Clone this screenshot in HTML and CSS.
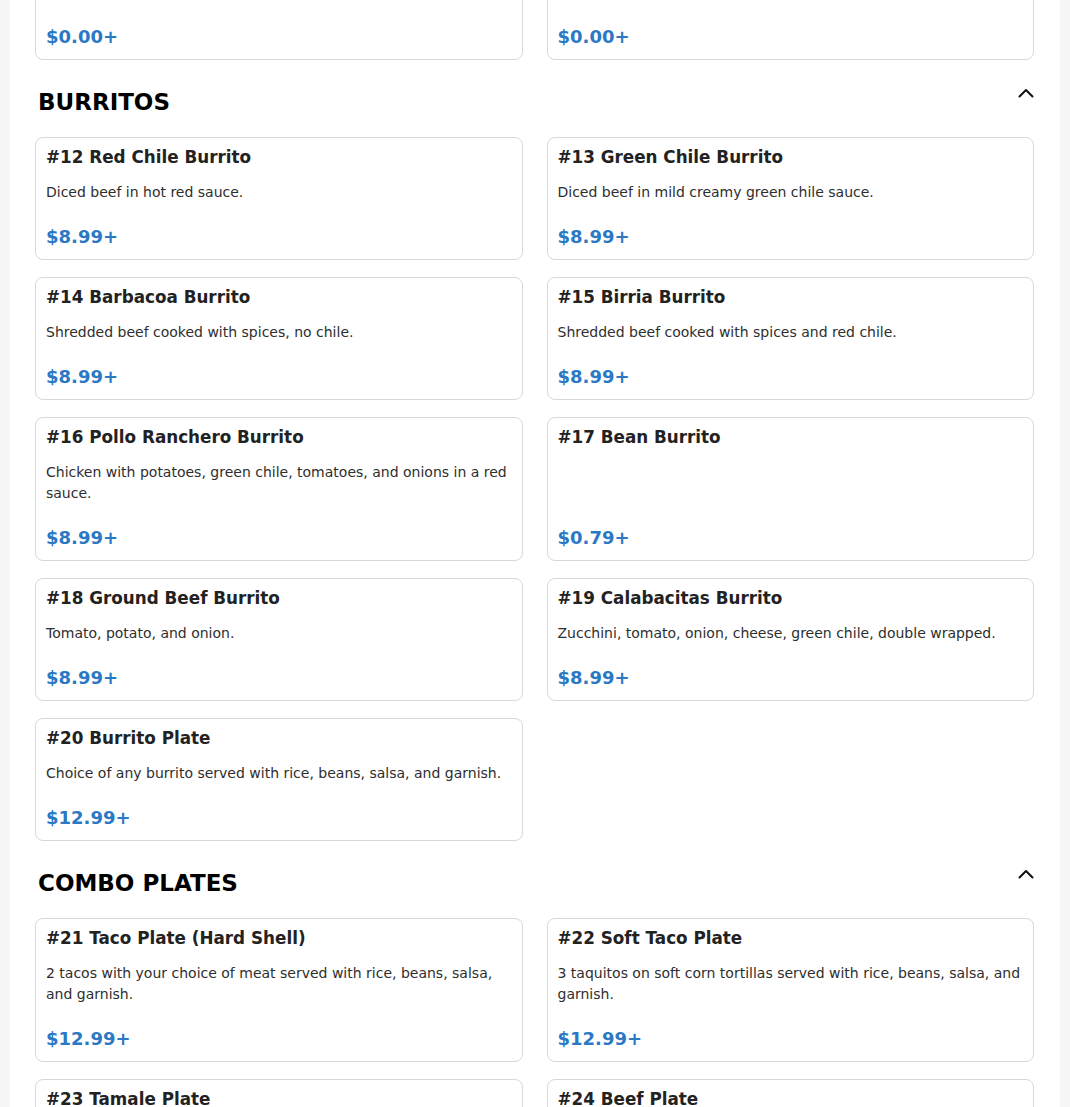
FILE: index.html
```html
<!DOCTYPE html>
<html lang="en">
<head>
<meta charset="utf-8">
<title>Menu</title>
<link rel="stylesheet" href="styles.css">
</head>
<body>
<main class="page">
  <section class="section section--cut">
    <div class="grid grid--cut">
      <article class="card card--cut"><div class="price">$0.00+</div></article>
      <article class="card card--cut"><div class="price">$0.00+</div></article>
    </div>
  </section>

  <section class="section">
    <header class="section-head">
      <h2 class="section-title">BURRITOS</h2>
      <button class="toggle" aria-label="Collapse"><svg width="16" height="16" viewBox="0 0 16 16"><polyline points="1.5,11.5 8,5 14.5,11.5" fill="none" stroke="#111" stroke-width="2" stroke-linecap="round" stroke-linejoin="round"/></svg></button>
    </header>
    <div class="grid">
      <article class="card"><h3 class="item-name">#12 Red Chile Burrito</h3><p class="item-desc">Diced beef in hot red sauce.</p><div class="price">$8.99+</div></article>
      <article class="card"><h3 class="item-name">#13 Green Chile Burrito</h3><p class="item-desc">Diced beef in mild creamy green chile sauce.</p><div class="price">$8.99+</div></article>
      <article class="card"><h3 class="item-name">#14 Barbacoa Burrito</h3><p class="item-desc">Shredded beef cooked with spices, no chile.</p><div class="price">$8.99+</div></article>
      <article class="card"><h3 class="item-name">#15 Birria Burrito</h3><p class="item-desc">Shredded beef cooked with spices and red chile.</p><div class="price">$8.99+</div></article>
      <article class="card"><h3 class="item-name">#16 Pollo Ranchero Burrito</h3><p class="item-desc">Chicken with potatoes, green chile, tomatoes, and onions in a red sauce.</p><div class="price">$8.99+</div></article>
      <article class="card"><h3 class="item-name">#17 Bean Burrito</h3><div class="price">$0.79+</div></article>
      <article class="card"><h3 class="item-name">#18 Ground Beef Burrito</h3><p class="item-desc">Tomato, potato, and onion.</p><div class="price">$8.99+</div></article>
      <article class="card"><h3 class="item-name">#19 Calabacitas Burrito</h3><p class="item-desc">Zucchini, tomato, onion, cheese, green chile, double wrapped.</p><div class="price">$8.99+</div></article>
      <article class="card"><h3 class="item-name">#20 Burrito Plate</h3><p class="item-desc">Choice of any burrito served with rice, beans, salsa, and garnish.</p><div class="price">$12.99+</div></article>
    </div>
  </section>

  <section class="section">
    <header class="section-head">
      <h2 class="section-title">COMBO PLATES</h2>
      <button class="toggle" aria-label="Collapse"><svg width="16" height="16" viewBox="0 0 16 16"><polyline points="1.5,11.5 8,5 14.5,11.5" fill="none" stroke="#111" stroke-width="2" stroke-linecap="round" stroke-linejoin="round"/></svg></button>
    </header>
    <div class="grid">
      <article class="card"><h3 class="item-name">#21 Taco Plate (Hard Shell)</h3><p class="item-desc">2 tacos with your choice of meat served with rice, beans, salsa, and garnish.</p><div class="price">$12.99+</div></article>
      <article class="card"><h3 class="item-name">#22 Soft Taco Plate</h3><p class="item-desc">3 taquitos on soft corn tortillas served with rice, beans, salsa, and garnish.</p><div class="price">$12.99+</div></article>
      <article class="card"><h3 class="item-name">#23 Tamale Plate</h3></article>
      <article class="card"><h3 class="item-name">#24 Beef Plate</h3></article>
    </div>
  </section>
</main>
</body>
</html>
```

FILE: styles.css
```css
* { box-sizing: border-box; }

html, body {
  margin: 0;
  padding: 0;
  background: #f7f7f7;
  font-family: "DejaVu Sans", "Liberation Sans", sans-serif;
  color: #1f1f1f;
}

.page {
  width: 1050px;
  margin: 0 auto;
  background: #ffffff;
  padding: 0 26px 40px 25px;
  min-height: 1107px;
  overflow: hidden;
}

.section-head {
  display: flex;
  justify-content: space-between;
  align-items: flex-start;
  margin: 28px 0 21px;
  padding: 0 0 0 3px;
}

.section-title {
  margin: 0;
  font-size: 23px;
  line-height: 28px;
  font-weight: 700;
  color: #000;
}

.toggle {
  border: 0;
  background: none;
  padding: 0;
  margin-top: -3px;
  width: 16px;
  height: 16px;
  display: block;
  cursor: pointer;
}

.toggle svg { display: block; }

.grid {
  display: grid;
  grid-template-columns: 1fr 1fr;
  column-gap: 24px;
  row-gap: 17px;
}

.grid--cut { margin-top: -64px; }

.card {
  display: flex;
  flex-direction: column;
  border: 1px solid #d8d8d8;
  border-radius: 8px;
  padding: 8px 10px 11px;
  background: #fff;
}

.card--cut { min-height: 124px; }

.item-name {
  margin: 0;
  font-size: 16.8px;
  line-height: 22px;
  font-weight: 700;
  color: #222;
}

.item-desc {
  margin: 14px 0 0;
  font-size: 14px;
  line-height: 21px;
  color: #2e2e2e;
}

.price {
  margin-top: auto;
  padding-top: 23px;
  font-size: 18px;
  line-height: 22px;
  font-weight: 700;
  color: #2b78c4;
}
```
